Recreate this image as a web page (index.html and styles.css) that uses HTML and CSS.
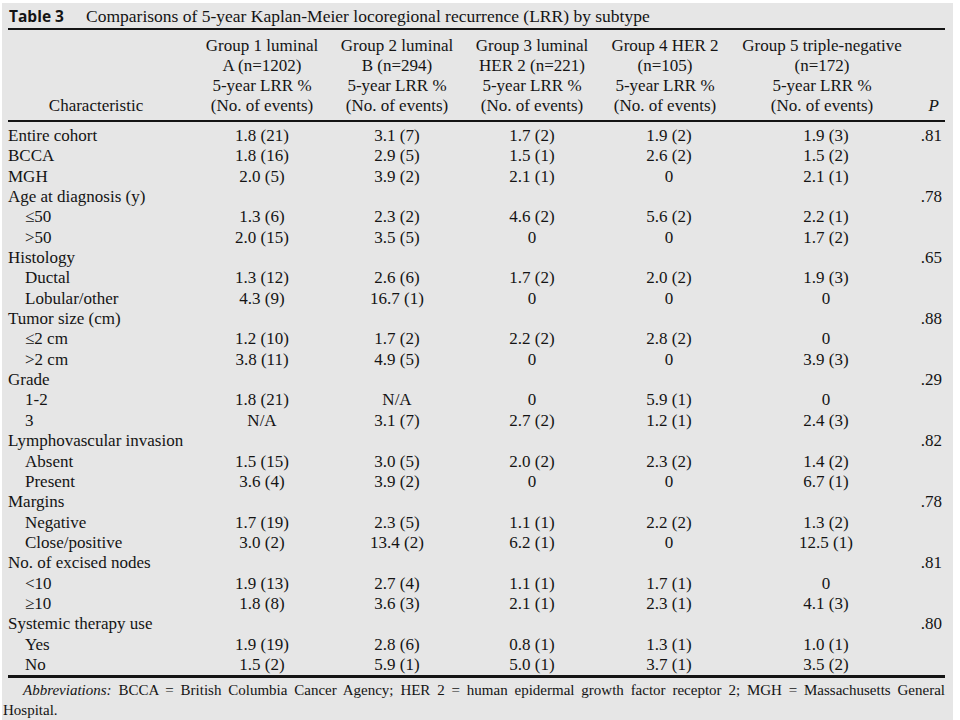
FILE: index.html
```html
<!DOCTYPE html>
<html>
<head>
<meta charset="utf-8">
<link rel="stylesheet" href="styles.css">
</head>
<body>
<div class="panel">
  <div class="sheet">
    <div class="caption"><span class="label">Table 3</span><span class="title">Comparisons of 5-year Kaplan-Meier locoregional recurrence (LRR) by subtype</span></div>
    <table class="data">
      <colgroup>
        <col class="c0"><col class="c1"><col class="c2"><col class="c3"><col class="c4"><col class="c5"><col class="c6">
      </colgroup>
      <thead>
        <tr>
          <th class="char">Characteristic</th>
          <th>Group 1 luminal<br>A (n=1202)<br>5-year LRR %<br>(No. of events)</th>
          <th>Group 2 luminal<br>B (n=294)<br>5-year LRR %<br>(No. of events)</th>
          <th>Group 3 luminal<br>HER 2 (n=221)<br>5-year LRR %<br>(No. of events)</th>
          <th>Group 4 HER 2<br>(n=105)<br>5-year LRR %<br>(No. of events)</th>
          <th>Group 5 triple-negative<br>(n=172)<br>5-year LRR %<br>(No. of events)</th>
          <th class="p"><i>P</i></th>
        </tr>
      </thead>
      <tbody>
        <tr><td>Entire cohort</td><td>1.8 (21)</td><td>3.1 (7)</td><td>1.7 (2)</td><td>1.9 (2)</td><td>1.9 (3)</td><td>.81</td></tr>
        <tr><td>BCCA</td><td>1.8 (16)</td><td>2.9 (5)</td><td>1.5 (1)</td><td>2.6 (2)</td><td>1.5 (2)</td><td></td></tr>
        <tr><td>MGH</td><td>2.0 (5)</td><td>3.9 (2)</td><td>2.1 (1)</td><td>0</td><td>2.1 (1)</td><td></td></tr>
        <tr><td>Age at diagnosis (y)</td><td></td><td></td><td></td><td></td><td></td><td>.78</td></tr>
        <tr><td class="sub">≤50</td><td>1.3 (6)</td><td>2.3 (2)</td><td>4.6 (2)</td><td>5.6 (2)</td><td>2.2 (1)</td><td></td></tr>
        <tr><td class="sub">&gt;50</td><td>2.0 (15)</td><td>3.5 (5)</td><td>0</td><td>0</td><td>1.7 (2)</td><td></td></tr>
        <tr><td>Histology</td><td></td><td></td><td></td><td></td><td></td><td>.65</td></tr>
        <tr><td class="sub">Ductal</td><td>1.3 (12)</td><td>2.6 (6)</td><td>1.7 (2)</td><td>2.0 (2)</td><td>1.9 (3)</td><td></td></tr>
        <tr><td class="sub">Lobular/other</td><td>4.3 (9)</td><td>16.7 (1)</td><td>0</td><td>0</td><td>0</td><td></td></tr>
        <tr><td>Tumor size (cm)</td><td></td><td></td><td></td><td></td><td></td><td>.88</td></tr>
        <tr><td class="sub">≤2 cm</td><td>1.2 (10)</td><td>1.7 (2)</td><td>2.2 (2)</td><td>2.8 (2)</td><td>0</td><td></td></tr>
        <tr><td class="sub">&gt;2 cm</td><td>3.8 (11)</td><td>4.9 (5)</td><td>0</td><td>0</td><td>3.9 (3)</td><td></td></tr>
        <tr><td>Grade</td><td></td><td></td><td></td><td></td><td></td><td>.29</td></tr>
        <tr><td class="sub">1-2</td><td>1.8 (21)</td><td>N/A</td><td>0</td><td>5.9 (1)</td><td>0</td><td></td></tr>
        <tr><td class="sub">3</td><td>N/A</td><td>3.1 (7)</td><td>2.7 (2)</td><td>1.2 (1)</td><td>2.4 (3)</td><td></td></tr>
        <tr><td>Lymphovascular invasion</td><td></td><td></td><td></td><td></td><td></td><td>.82</td></tr>
        <tr><td class="sub">Absent</td><td>1.5 (15)</td><td>3.0 (5)</td><td>2.0 (2)</td><td>2.3 (2)</td><td>1.4 (2)</td><td></td></tr>
        <tr><td class="sub">Present</td><td>3.6 (4)</td><td>3.9 (2)</td><td>0</td><td>0</td><td>6.7 (1)</td><td></td></tr>
        <tr><td>Margins</td><td></td><td></td><td></td><td></td><td></td><td>.78</td></tr>
        <tr><td class="sub">Negative</td><td>1.7 (19)</td><td>2.3 (5)</td><td>1.1 (1)</td><td>2.2 (2)</td><td>1.3 (2)</td><td></td></tr>
        <tr><td class="sub">Close/positive</td><td>3.0 (2)</td><td>13.4 (2)</td><td>6.2 (1)</td><td>0</td><td>12.5 (1)</td><td></td></tr>
        <tr><td>No. of excised nodes</td><td></td><td></td><td></td><td></td><td></td><td>.81</td></tr>
        <tr><td class="sub">&lt;10</td><td>1.9 (13)</td><td>2.7 (4)</td><td>1.1 (1)</td><td>1.7 (1)</td><td>0</td><td></td></tr>
        <tr><td class="sub">≥10</td><td>1.8 (8)</td><td>3.6 (3)</td><td>2.1 (1)</td><td>2.3 (1)</td><td>4.1 (3)</td><td></td></tr>
        <tr><td>Systemic therapy use</td><td></td><td></td><td></td><td></td><td></td><td>.80</td></tr>
        <tr><td class="sub">Yes</td><td>1.9 (19)</td><td>2.8 (6)</td><td>0.8 (1)</td><td>1.3 (1)</td><td>1.0 (1)</td><td></td></tr>
        <tr><td class="sub">No</td><td>1.5 (2)</td><td>5.9 (1)</td><td>5.0 (1)</td><td>3.7 (1)</td><td>3.5 (2)</td><td></td></tr>
      </tbody>
    </table>
  </div>
  <div class="notes">
    <span class="line1"><i>Abbreviations:</i> BCCA = British Columbia Cancer Agency; HER 2 = human epidermal growth factor receptor 2; MGH = Massachusetts General</span>
    <span class="line2">Hospital.</span>
  </div>
</div>
</body>
</html>
```

FILE: styles.css
```css
html, body {
  margin: 0;
  padding: 0;
  background: #ffffff;
}

.panel {
  margin: 3px 7px 0 2px;
  height: 717px;
  background: #e6e6e6;
  color: #141414;
  font-family: "Liberation Serif", "Times New Roman", serif;
  font-size: 17px;
  box-sizing: border-box;
  padding-top: 3px;
  overflow: hidden;
}

.sheet {
  margin-left: 6px;
  width: 937px;
}

.caption {
  display: flex;
  align-items: baseline;
  line-height: 20px;
  height: 22px;
  margin-bottom: 4px;
  border-bottom: 2px solid #141414;
  box-sizing: content-box;
}

.label {
  font-family: "Open Sans", "DejaVu Sans", sans-serif;
  font-weight: 700;
  font-size: 15.5px;
  width: 77px;
  padding-left: 1px;
}

.title {
  font-size: 17.5px;
}

.data {
  width: 937px;
  table-layout: fixed;
  border-collapse: collapse;
  border-spacing: 0;
}

.c0 { width: 188px; }
.c1 { width: 132px; }
.c2 { width: 138px; }
.c3 { width: 132px; }
.c4 { width: 134px; }
.c5 { width: 180px; }
.c6 { width: 33px; }

.data th {
  font-weight: normal;
  line-height: 20px;
  padding: 2px 0 4px;
  vertical-align: bottom;
  text-align: center;
  white-space: nowrap;
  border-bottom: 2px solid #141414;
}

.data th.char {
  text-align: center;
  padding-right: 12px;
}

.data th.p {
  text-align: right;
  padding-right: 6px;
}

.data td {
  line-height: 20.35px;
  height: 20.35px;
  padding: 0;
  text-align: center;
  white-space: nowrap;
}

.data td:first-child {
  text-align: left;
}

.data td.sub {
  padding-left: 17px;
}

.data td:nth-child(5),
.data td:nth-child(6) {
  padding-left: 8px;
}

.data td:last-child {
  text-align: right;
  padding-right: 3px;
}

.data tbody tr:first-child td {
  padding-top: 4px;
}

.data tbody tr:last-child td {
  border-bottom: 3px solid #141414;
}

.notes {
  font-size: 15px;
  line-height: 20px;
  padding: 2px 8px 0 1px;
}

.line1 {
  display: block;
  text-align: justify;
  text-align-last: justify;
  padding-left: 20px;
}

.line2 {
  display: block;
}
```
